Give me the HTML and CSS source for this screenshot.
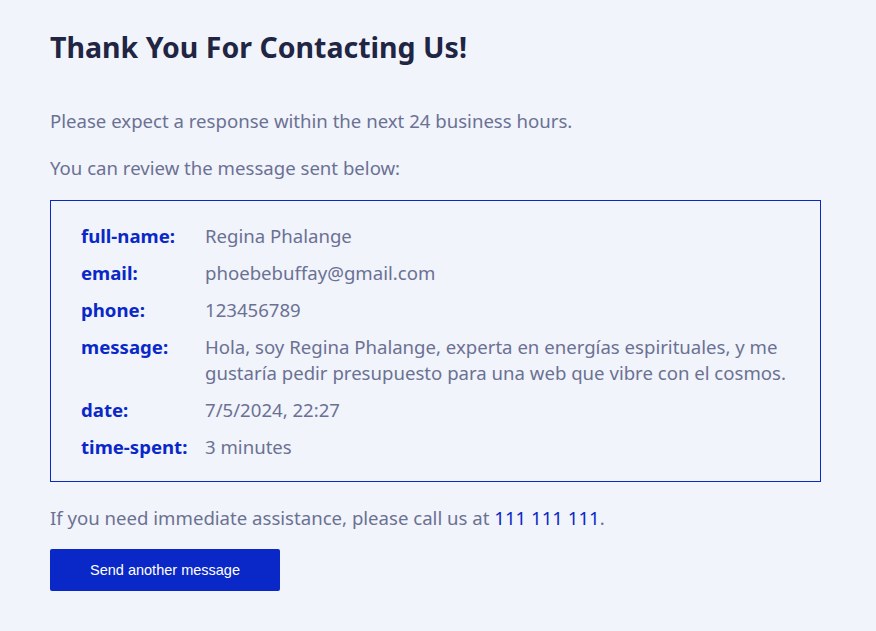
FILE: index.html
```html
<!DOCTYPE html>
<html lang="en">
<head>
<meta charset="utf-8">
<title>Thank You</title>
<link rel="stylesheet" href="styles.css">
</head>
<body>
<main class="page">
  <h1 class="title">Thank You For Contacting Us!</h1>
  <p class="text">Please expect a response within the next 24 business hours.</p>
  <p class="text lead-in">You can review the message sent below:</p>
  <dl class="summary">
    <dt>full-name:</dt><dd>Regina Phalange</dd>
    <dt>email:</dt><dd>phoebebuffay@gmail.com</dd>
    <dt>phone:</dt><dd>123456789</dd>
    <dt>message:</dt><dd>Hola, soy Regina Phalange, experta en energías espirituales, y me gustaría pedir presupuesto para una web que vibre con el cosmos.</dd>
    <dt>date:</dt><dd>7/5/2024, 22:27</dd>
    <dt>time-spent:</dt><dd>3 minutes</dd>
  </dl>
  <p class="text assist">If you need immediate assistance, please call us at <a class="phone" href="#">111 111 111</a>.</p>
  <button class="btn" type="button">Send another message</button>
</main>
</body>
</html>
```
FILE: styles.css
```css
html, body {
  margin: 0;
  background: #f1f4fb;
}
body {
  font-family: "Noto Sans", "Open Sans", sans-serif;
  color: #6b7193;
}
.page {
  padding: 28px 55px 40px 50px;
}
.title {
  margin: 0 0 42px;
  font-size: 28.5px;
  line-height: 38px;
  font-weight: 700;
  color: #1f2543;
}
.text {
  margin: 0 0 21px;
  font-size: 18.6px;
  line-height: 26px;
}
.text.lead-in {
  margin-bottom: 19px;
}
.text.assist {
  margin-bottom: 18px;
}
.summary {
  margin: 0 0 23px;
  border: 1px solid #0a28c8;
  padding: 22px 30px 21px 30px;
  display: grid;
  grid-template-columns: 124px 1fr;
  row-gap: 11px;
  font-size: 18.6px;
  line-height: 26px;
}
.summary dt {
  font-weight: 700;
  color: #0a28c8;
}
.summary dd {
  margin: 0;
}
.phone {
  color: #0a28c8;
  text-decoration: none;
}
.btn {
  display: block;
  margin: 0;
  width: 230px;
  height: 42px;
  border: none;
  border-radius: 2px;
  background: #0a28c8;
  color: #ffffff;
  font-family: "Liberation Sans", Arial, sans-serif;
  font-size: 14.5px;
}
```
